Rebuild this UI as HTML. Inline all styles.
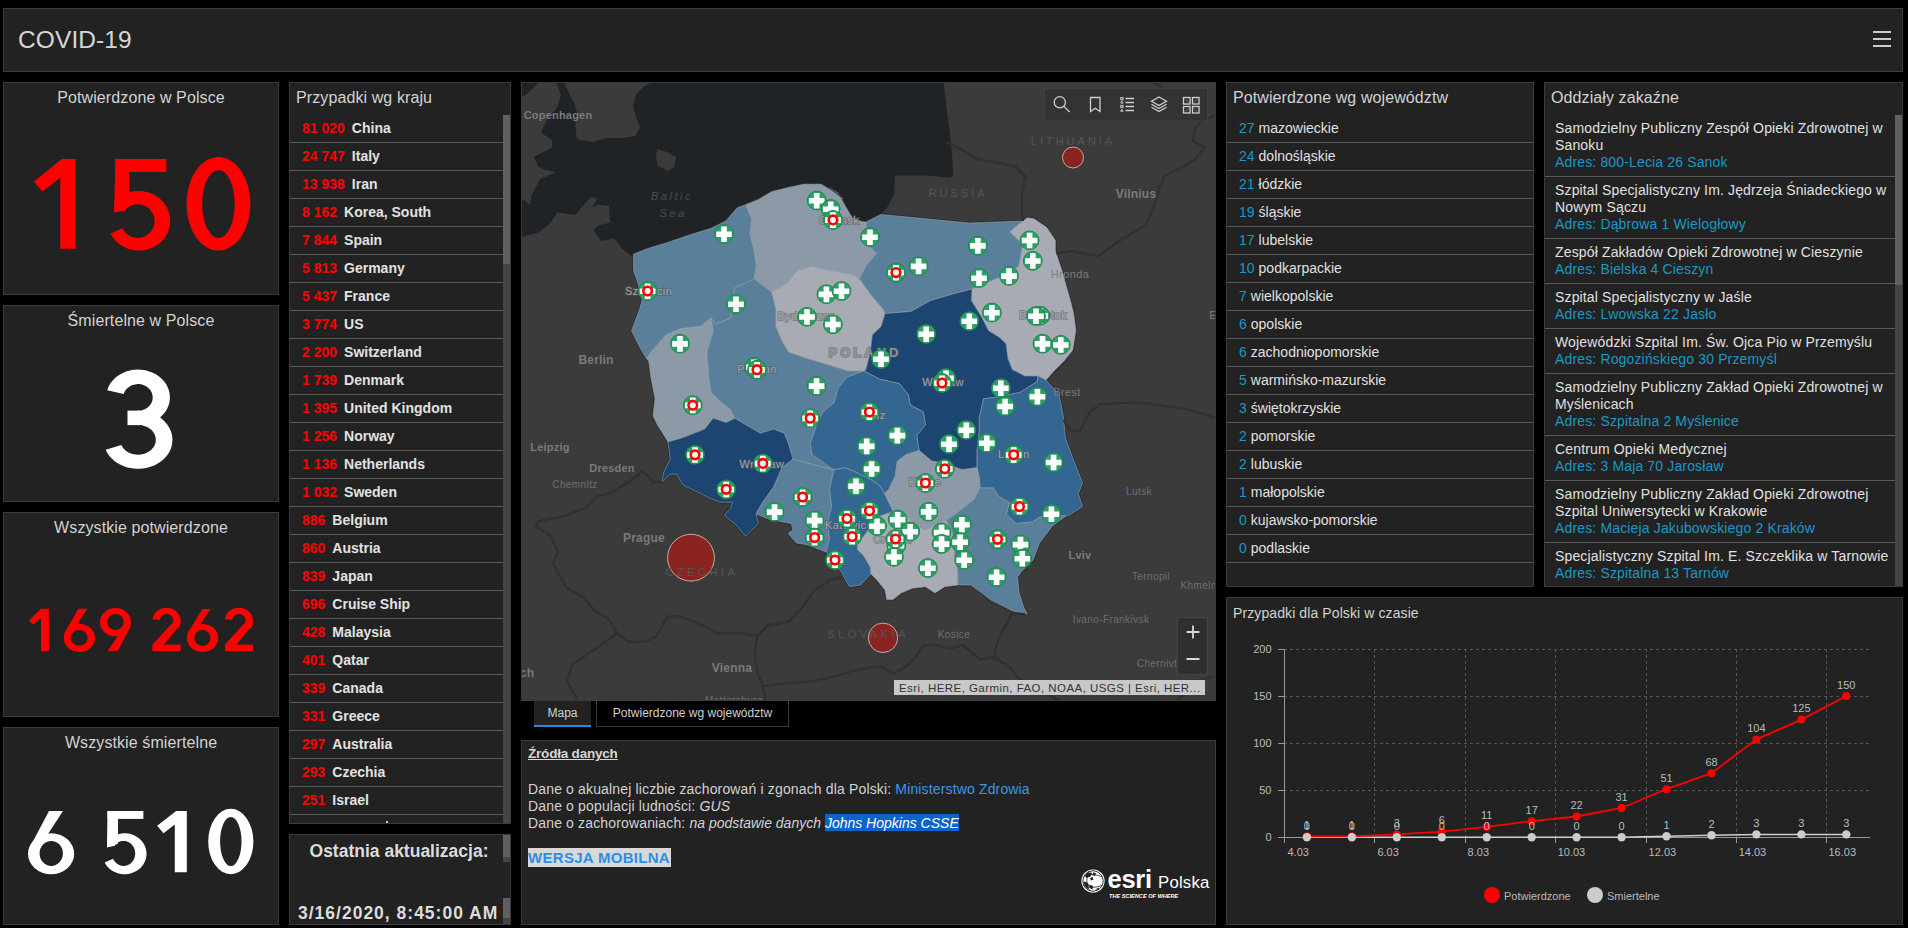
<!DOCTYPE html>
<html><head><meta charset="utf-8">
<style>
*{box-sizing:border-box;margin:0;padding:0}
html,body{width:1908px;height:928px;background:#000;overflow:hidden;font-family:"Liberation Sans",sans-serif;color:#d4d4d4}
.p{position:absolute;background:#222;border:1px solid #3b3b3b;overflow:hidden}
.ttl{position:absolute;font-size:16px;color:#d2d2d2;white-space:nowrap;letter-spacing:0.1px}
.big{position:absolute;left:0;right:0;text-align:center;white-space:nowrap;line-height:1}
.row{position:absolute;left:0;height:28px;border-bottom:1px solid #5a5a5a;white-space:nowrap;font-size:14px}
.row{padding:5px 0 0 12px;line-height:16px}
.cn{color:#f00;font-weight:bold}
.cc{color:#e2e2e2;font-weight:bold;margin-left:7px}
.pn{color:#1b98c4}
.pc{color:#e0e0e0;margin-left:4px}
.hrow{position:absolute;left:0;width:350px;border-bottom:1px solid #5a5a5a;padding:5px 0 0 10px;font-size:14px;line-height:17px;color:#e0e0e0;white-space:nowrap;letter-spacing:0.15px}
.adr{color:#1b98c4}
.upd{position:absolute;left:0;right:8px;text-align:center;font-size:17.5px;font-weight:bold;color:#dcdcdc;white-space:nowrap}
</style></head><body>
<!-- header -->
<div class="p" style="left:3px;top:8px;width:1900px;height:64px">
  <div class="ttl" style="left:14px;top:17px;font-size:24.5px;color:#d6d6d6">COVID-19</div>
  <div style="position:absolute;left:1869px;top:22px;width:18px;height:2px;background:#ccc"></div>
  <div style="position:absolute;left:1869px;top:29px;width:18px;height:2px;background:#ccc"></div>
  <div style="position:absolute;left:1869px;top:36px;width:18px;height:2px;background:#ccc"></div>
</div>
<!-- col1 -->
<div class="p" style="left:3px;top:82px;width:276px;height:213px">
  <div class="ttl" style="left:0;right:0;text-align:center;top:6px">Potwierdzone w Polsce</div>
  
</div>
<div class="p" style="left:3px;top:305px;width:276px;height:197px">
  <div class="ttl" style="left:0;right:0;text-align:center;top:6px">Śmiertelne w Polsce</div>
  
</div>
<div class="p" style="left:3px;top:512px;width:276px;height:205px">
  <div class="ttl" style="left:0;right:0;text-align:center;top:6px">Wszystkie potwierdzone</div>
  
</div>
<div class="p" style="left:3px;top:727px;width:276px;height:198px">
  <div class="ttl" style="left:0;right:0;text-align:center;top:6px">Wszystkie śmiertelne</div>
  
</div>
<div class="p" style="left:289px;top:82px;width:222px;height:742px">
<div class="ttl" style="left:6px;top:6px">Przypadki wg kraju</div>
<div style="position:absolute;left:213px;top:32px;width:8px;height:720px;background:#444"></div>
<div style="position:absolute;left:213px;top:32px;width:8px;height:149px;background:#606060"></div>
<div class="row" style="top:32px;width:213px"><span class="cn">81 020</span><span class="cc">China</span></div>
<div class="row" style="top:60px;width:213px"><span class="cn">24 747</span><span class="cc">Italy</span></div>
<div class="row" style="top:88px;width:213px"><span class="cn">13 938</span><span class="cc">Iran</span></div>
<div class="row" style="top:116px;width:213px"><span class="cn">8 162</span><span class="cc">Korea, South</span></div>
<div class="row" style="top:144px;width:213px"><span class="cn">7 844</span><span class="cc">Spain</span></div>
<div class="row" style="top:172px;width:213px"><span class="cn">5 813</span><span class="cc">Germany</span></div>
<div class="row" style="top:200px;width:213px"><span class="cn">5 437</span><span class="cc">France</span></div>
<div class="row" style="top:228px;width:213px"><span class="cn">3 774</span><span class="cc">US</span></div>
<div class="row" style="top:256px;width:213px"><span class="cn">2 200</span><span class="cc">Switzerland</span></div>
<div class="row" style="top:284px;width:213px"><span class="cn">1 739</span><span class="cc">Denmark</span></div>
<div class="row" style="top:312px;width:213px"><span class="cn">1 395</span><span class="cc">United Kingdom</span></div>
<div class="row" style="top:340px;width:213px"><span class="cn">1 256</span><span class="cc">Norway</span></div>
<div class="row" style="top:368px;width:213px"><span class="cn">1 136</span><span class="cc">Netherlands</span></div>
<div class="row" style="top:396px;width:213px"><span class="cn">1 032</span><span class="cc">Sweden</span></div>
<div class="row" style="top:424px;width:213px"><span class="cn">886</span><span class="cc">Belgium</span></div>
<div class="row" style="top:452px;width:213px"><span class="cn">860</span><span class="cc">Austria</span></div>
<div class="row" style="top:480px;width:213px"><span class="cn">839</span><span class="cc">Japan</span></div>
<div class="row" style="top:508px;width:213px"><span class="cn">696</span><span class="cc">Cruise Ship</span></div>
<div class="row" style="top:536px;width:213px"><span class="cn">428</span><span class="cc">Malaysia</span></div>
<div class="row" style="top:564px;width:213px"><span class="cn">401</span><span class="cc">Qatar</span></div>
<div class="row" style="top:592px;width:213px"><span class="cn">339</span><span class="cc">Canada</span></div>
<div class="row" style="top:620px;width:213px"><span class="cn">331</span><span class="cc">Greece</span></div>
<div class="row" style="top:648px;width:213px"><span class="cn">297</span><span class="cc">Australia</span></div>
<div class="row" style="top:676px;width:213px"><span class="cn">293</span><span class="cc">Czechia</span></div>
<div class="row" style="top:704px;width:213px"><span class="cn">251</span><span class="cc">Israel</span></div>
<div class="row" style="top:732px;width:213px"><span class="cn"></span><span class="cc"></span><div style="position:absolute;left:96px;top:6px;width:2px;height:2px;background:#ccc"></div></div>
</div>
<div class="p" style="left:289px;top:834px;width:222px;height:91px">
<div class="upd" style="top:6px;right:2px">Ostatnia aktualizacja:</div>
<div class="upd" style="top:68px;left:8px;text-align:left;letter-spacing:1px">3/16/2020, 8:45:00 AM</div>
<div style="position:absolute;left:213px;top:0;width:8px;height:22px;background:#606060"></div>
<div style="position:absolute;left:213px;top:22px;width:8px;height:5px;background:#444"></div>
<div style="position:absolute;left:213px;top:63px;width:8px;height:20px;background:#606060"></div>
<div style="position:absolute;left:213px;top:83px;width:8px;height:6px;background:#444"></div>
</div>
<div class="p" style="left:1226px;top:82px;width:308px;height:505px">
<div class="ttl" style="left:6px;top:6px">Potwierdzone wg województw</div>
<div class="row" style="top:32px;width:306px"><span class="pn">27</span><span class="pc">mazowieckie</span></div>
<div class="row" style="top:60px;width:306px"><span class="pn">24</span><span class="pc">dolnośląskie</span></div>
<div class="row" style="top:88px;width:306px"><span class="pn">21</span><span class="pc">łódzkie</span></div>
<div class="row" style="top:116px;width:306px"><span class="pn">19</span><span class="pc">śląskie</span></div>
<div class="row" style="top:144px;width:306px"><span class="pn">17</span><span class="pc">lubelskie</span></div>
<div class="row" style="top:172px;width:306px"><span class="pn">10</span><span class="pc">podkarpackie</span></div>
<div class="row" style="top:200px;width:306px"><span class="pn">7</span><span class="pc">wielkopolskie</span></div>
<div class="row" style="top:228px;width:306px"><span class="pn">6</span><span class="pc">opolskie</span></div>
<div class="row" style="top:256px;width:306px"><span class="pn">6</span><span class="pc">zachodniopomorskie</span></div>
<div class="row" style="top:284px;width:306px"><span class="pn">5</span><span class="pc">warmińsko-mazurskie</span></div>
<div class="row" style="top:312px;width:306px"><span class="pn">3</span><span class="pc">świętokrzyskie</span></div>
<div class="row" style="top:340px;width:306px"><span class="pn">2</span><span class="pc">pomorskie</span></div>
<div class="row" style="top:368px;width:306px"><span class="pn">2</span><span class="pc">lubuskie</span></div>
<div class="row" style="top:396px;width:306px"><span class="pn">1</span><span class="pc">małopolskie</span></div>
<div class="row" style="top:424px;width:306px"><span class="pn">0</span><span class="pc">kujawsko-pomorskie</span></div>
<div class="row" style="top:452px;width:306px"><span class="pn">0</span><span class="pc">podlaskie</span></div>
</div>
<div class="p" style="left:1544px;top:82px;width:359px;height:505px">
<div class="ttl" style="left:6px;top:6px">Oddziały zakaźne</div>
<div style="position:absolute;left:350px;top:32px;width:7px;height:480px;background:#444"></div>
<div style="position:absolute;left:350px;top:32px;width:7px;height:170px;background:#606060"></div>
<div class="hrow" style="top:32px;height:62px"><div>Samodzielny Publiczny Zespół Opieki Zdrowotnej w</div><div>Sanoku</div><div class="adr">Adres: 800-Lecia 26 Sanok</div></div>
<div class="hrow" style="top:94px;height:62px"><div>Szpital Specjalistyczny Im. Jędrzeja Śniadeckiego w</div><div>Nowym Sączu</div><div class="adr">Adres: Dąbrowa 1 Wielogłowy</div></div>
<div class="hrow" style="top:156px;height:45px"><div>Zespół Zakładów Opieki Zdrowotnej w Cieszynie</div><div class="adr">Adres: Bielska 4 Cieszyn</div></div>
<div class="hrow" style="top:201px;height:45px"><div>Szpital Specjalistyczny w Jaśle</div><div class="adr">Adres: Lwowska 22 Jasło</div></div>
<div class="hrow" style="top:246px;height:45px"><div>Wojewódzki Szpital Im. Św. Ojca Pio w Przemyślu</div><div class="adr">Adres: Rogozińskiego 30 Przemyśl</div></div>
<div class="hrow" style="top:291px;height:62px"><div>Samodzielny Publiczny Zakład Opieki Zdrowotnej w</div><div>Myślenicach</div><div class="adr">Adres: Szpitalna 2 Myślenice</div></div>
<div class="hrow" style="top:353px;height:45px"><div>Centrum Opieki Medycznej</div><div class="adr">Adres: 3 Maja 70 Jarosław</div></div>
<div class="hrow" style="top:398px;height:62px"><div>Samodzielny Publiczny Zakład Opieki Zdrowotnej</div><div>Szpital Uniwersytecki w Krakowie</div><div class="adr">Adres: Macieja Jakubowskiego 2 Kraków</div></div>
<div class="hrow" style="top:460px;height:45px"><div>Specjalistyczny Szpital Im. E. Szczeklika w Tarnowie</div><div class="adr">Adres: Szpitalna 13 Tarnów</div></div>
</div>
<div style="position:absolute;left:534px;top:700px;width:57px;height:27px;background:#222;border-bottom:2px solid #2a8be0;font-size:12px;color:#d0d0d0;text-align:center;line-height:26px">Mapa</div>
<div style="position:absolute;left:596px;top:700px;width:193px;height:27px;background:#000;border:1px solid #3b3b3b;border-top:none;font-size:12px;color:#d0d0d0;text-align:center;line-height:26px">Potwierdzone wg województw</div>
<div class="p" style="left:521px;top:740px;width:695px;height:185px;font-size:14px;letter-spacing:0.15px;color:#d2d2d2">
<div style="position:absolute;left:6px;top:5px;font-size:13.5px;font-weight:bold;letter-spacing:-0.2px;text-decoration:underline;color:#d6d6d6">Źródła danych</div>
<div style="position:absolute;left:6px;top:40px;line-height:17px;white-space:nowrap">Dane o akualnej liczbie zachorowań i zgonach dla Polski: <span style="color:#3d97ea">Ministerstwo Zdrowia</span><br>Dane o populacji ludności: <i>GUS</i><br>Dane o zachorowaniach: <i style="letter-spacing:0">na podstawie danych <span style="background:#0b63cc;color:#fff;padding-top:1px">Johns Hopkins CSSE</span></i></div>
<div style="position:absolute;left:6px;top:107px;width:143px;height:19px;background:#d8d8d8;color:#2a8fe8;font-size:15px;font-weight:bold;letter-spacing:0.3px;line-height:19px;white-space:nowrap">WERSJA MOBILNA</div>
</div>
<svg style="position:absolute;left:1075px;top:862px" width="140" height="40" viewBox="1075 862 140 40" font-family="Liberation Sans, sans-serif">
<circle cx="1093" cy="881" r="11.6" fill="#fff"/>
<circle cx="1093" cy="881" r="10.2" fill="none" stroke="#222" stroke-width="0.9"/>
<path d="M1085,875c2.5,-2.5 5,-3 7,-2l-1.5,3.5l-4,1.5zM1083.5,881.5c2.5,0 4.5,1.5 5.5,3.5l-1,4c-2.5,-1.5 -4,-4 -4.5,-7.5zM1089.5,884.5l3.5,1.5l-0.5,3.5l-3,-1.5zM1093,872.5l3,0.5l-1,3l-2.5,-1zM1095.5,889.5l3,-2l0.5,2.5zM1090,878l2.5,-1l1,2.5l-2.5,1z" fill="#222"/>
<path d="M1084,877c5,-3 13,-3 18,0M1083,885c5,3 14,3 19,0M1089,871c-3,5 -3,15 1,20" fill="none" stroke="#222" stroke-width="0.8"/>
<text x="1107.5" y="888" font-size="25.5" font-weight="bold" fill="#fff" letter-spacing="-0.3">esri</text>
<text x="1158" y="887.7" font-size="16.8" fill="#fff" letter-spacing="0.2">Polska</text>
<text x="1109" y="897.5" font-size="5.6" font-weight="bold" font-style="italic" fill="#fff">THE SCIENCE OF WHERE</text>
</svg>
<!--DIG--><svg style="position:absolute;left:0;top:0" width="290" height="928" viewBox="0 0 290 928">
<g fill="#f00"><polygon points="34.0,181.6 61.8,159.0 75.6,159.0 75.6,248.8 60.3,248.8 60.3,177.7 42.5,191.6"/><rect x="115.4" y="159" width="51.00" height="13.00"/><polygon points="115.4,159.0 129.3,159.0 129.0,207.0 114.2,211.0"/><polygon points="114.2,202.5 116.5,200.0 118.9,197.8 121.7,195.9 124.6,194.3 127.7,193.0 130.9,192.0 134.2,191.3 137.5,191.0 140.9,191.1 144.3,191.4 147.6,192.2 150.8,193.2 153.8,194.6 156.7,196.3 159.4,198.2 161.8,200.5 164.0,202.9 165.8,205.6 167.4,208.5 168.6,211.5 169.5,214.6 170.0,217.7 170.2,221.0 170.0,224.2 169.4,227.3 168.5,230.4 167.3,233.4 165.7,236.3 163.8,238.9 161.6,241.4 159.1,243.6 156.4,245.5 153.5,247.2 150.4,248.5 147.2,249.5 143.9,250.2 140.6,250.6 137.2,250.6 133.8,250.2 130.5,249.5 127.3,248.5 124.3,247.1 121.4,245.5 118.7,243.5 116.2,241.3 114.0,238.9 112.1,236.2 110.5,233.4 122.4,228.2 123.2,229.9 124.3,231.4 125.5,232.7 126.8,234.0 128.2,235.1 129.8,236.0 131.5,236.8 133.2,237.4 135.0,237.8 136.8,238.0 138.6,238.0 140.4,237.8 142.2,237.4 143.9,236.8 145.6,236.0 147.2,235.1 148.6,234.0 149.9,232.8 151.1,231.4 152.1,229.9 153.0,228.3 153.7,226.6 154.2,224.8 154.5,223.0 154.6,221.2 154.5,219.4 154.2,217.6 153.7,215.8 153.1,214.1 152.2,212.5 151.2,211.0 150.1,209.6 148.7,208.3 147.3,207.2 145.7,206.2 144.1,205.5 142.4,204.9 140.6,204.5 138.8,204.2 137.0,204.2 135.1,204.4 133.4,204.8 131.6,205.3 130.0,206.1 128.4,207.0 126.9,208.1 125.6,209.3 124.4,210.7"/><polygon points="114.2,203.0 129.2,203.0 126.8,208.2 124.4,210.7 114.2,212.5"/><path fill-rule="evenodd" d="M186.50,203.80a31.95,46.80 0 1,0 63.90,0a31.95,46.80 0 1,0 -63.90,0zM202.20,203.95a16.25,34.05 0 1,0 32.50,0a16.25,34.05 0 1,0 -32.50,0z"/></g>
<g fill="#fff"><polygon points="107.2,390.2 108.1,387.7 109.2,385.4 110.6,383.1 112.3,381.0 114.1,379.0 116.2,377.1 118.4,375.4 120.9,374.0 123.4,372.7 126.1,371.6 128.9,370.8 131.8,370.1 134.7,369.7 137.7,369.6 140.6,369.7 143.5,370.0 146.4,370.6 149.2,371.4 152.0,372.4 154.5,373.6 157.0,375.1 159.3,376.7 161.4,378.5 163.3,380.5 165.0,382.6 166.5,384.8 167.7,387.2 168.6,389.6 169.3,392.1 169.7,394.7 169.9,397.2 169.8,399.8 169.4,402.4 168.7,404.9 167.8,407.3 166.6,409.7 165.2,412.0 163.5,414.1 161.6,416.1 159.6,417.9 157.3,419.5 154.8,421.0 152.3,422.3 149.6,423.3 146.8,424.1 143.9,424.7 141.0,425.1 138.0,425.2 138.0,410.7 139.4,410.6 140.7,410.5 142.0,410.2 143.3,409.8 144.6,409.3 145.8,408.7 146.9,408.0 147.9,407.2 148.9,406.3 149.8,405.4 150.5,404.4 151.2,403.3 151.7,402.2 152.2,401.0 152.5,399.8 152.6,398.6 152.7,397.3 152.6,396.1 152.4,394.9 152.1,393.7 151.7,392.5 151.1,391.4 150.4,390.3 149.7,389.3 148.8,388.4 147.8,387.5 146.8,386.7 145.6,386.0 144.4,385.4 143.2,385.0 141.9,384.6 140.6,384.3 139.2,384.1 137.8,384.1 136.5,384.2 135.1,384.4 133.8,384.7 132.5,385.1 131.3,385.6 130.1,386.2 129.0,386.9 128.0,387.7 127.0,388.6 126.1,389.5 125.4,390.6 124.7,391.6 124.2,392.8 123.8,394.0"/><rect x="127.5" y="410.6" width="11.50" height="14.50"/><polygon points="138.0,410.8 141.1,410.9 144.2,411.3 147.3,411.9 150.2,412.7 153.1,413.7 155.8,415.0 158.4,416.5 160.9,418.1 163.1,420.0 165.1,422.0 166.9,424.1 168.5,426.4 169.8,428.8 170.9,431.3 171.7,433.8 172.2,436.4 172.4,439.1 172.3,441.7 172.0,444.3 171.4,446.9 170.5,449.4 169.3,451.9 167.9,454.2 166.2,456.4 164.3,458.5 162.1,460.5 159.8,462.2 157.3,463.8 154.7,465.2 151.9,466.3 148.9,467.3 145.9,468.0 142.9,468.5 139.8,468.8 136.6,468.8 133.5,468.6 130.4,468.1 127.4,467.4 124.5,466.5 121.7,465.3 119.0,464.0 116.5,462.4 114.1,460.7 112.0,458.8 110.0,456.7 108.3,454.5 106.9,452.2 105.7,449.7 121.3,444.9 121.9,446.1 122.6,447.3 123.5,448.5 124.5,449.5 125.6,450.5 126.9,451.4 128.2,452.2 129.6,452.9 131.0,453.5 132.5,454.0 134.1,454.3 135.7,454.6 137.3,454.7 138.9,454.7 140.5,454.6 142.1,454.3 143.7,453.9 145.2,453.4 146.6,452.8 148.0,452.1 149.3,451.3 150.5,450.4 151.6,449.4 152.6,448.3 153.4,447.2 154.2,446.0 154.8,444.7 155.3,443.4 155.6,442.1 155.8,440.8 155.8,439.4 155.7,438.1 155.4,436.7 155.0,435.4 154.5,434.1 153.8,432.9 153.0,431.7 152.0,430.6 151.0,429.6 149.8,428.7 148.6,427.8 147.2,427.1 145.8,426.4 144.3,425.9 142.8,425.5 141.2,425.1 139.6,425.0 138.0,424.9"/></g>
<g fill="#f00"><polygon points="29.1,620.6 41.0,608.7 48.9,608.7 48.9,651.0 41.0,651.0 41.0,618.1 33.3,624.8"/><path fill-rule="evenodd" d="M63.80,638.00a15.60,14.00 0 1,0 31.20,0a15.60,14.00 0 1,0 -31.20,0zM70.80,637.90a8.40,7.90 0 1,0 16.80,0a8.40,7.90 0 1,0 -16.80,0z"/><polygon points="78.5,608.7 87.2,608.7 75.5,627.5 64.2,633.5"/><path fill-rule="evenodd" d="M99.90,622.15a15.55,14.15 0 1,0 31.10,0a15.55,14.15 0 1,0 -31.10,0zM107.20,621.95a8.25,8.05 0 1,0 16.50,0a8.25,8.05 0 1,0 -16.50,0z"/><polygon points="130.9,626.0 117.7,651.0 107.6,651.0 121.5,630.5"/><polygon points="152.4,619.2 152.6,618.2 152.9,617.2 153.3,616.2 153.7,615.3 154.2,614.4 154.8,613.6 155.4,612.8 156.1,612.0 156.9,611.3 157.7,610.6 158.6,610.0 159.5,609.5 160.5,609.0 161.5,608.7 162.5,608.3 163.5,608.1 164.6,607.9 165.7,607.8 166.8,607.8 167.9,607.9 168.9,608.0 170.0,608.2 171.0,608.5 172.0,608.8 173.0,609.3 174.0,609.8 174.9,610.3 175.7,611.0 176.5,611.6 177.3,612.4 177.9,613.2 178.5,614.0 179.1,614.9 179.5,615.8 179.9,616.7 180.2,617.7 180.5,618.7 180.6,619.7 180.7,620.7 180.7,621.7 180.6,622.7 180.4,623.7 180.1,624.7 179.8,625.6 179.4,626.6 178.9,627.4 178.3,628.3 177.7,629.1 171.9,625.4 172.2,624.9 172.4,624.5 172.7,624.0 172.9,623.5 173.0,623.0 173.2,622.4 173.2,621.9 173.3,621.4 173.3,620.8 173.3,620.3 173.2,619.8 173.1,619.2 172.9,618.7 172.7,618.2 172.5,617.7 172.3,617.2 172.0,616.8 171.7,616.4 171.3,616.0 170.9,615.6 170.5,615.3 170.1,615.0 169.6,614.7 169.2,614.5 168.7,614.3 168.2,614.1 167.7,614.0 167.2,613.9 166.6,613.9 166.1,613.9 165.6,614.0 165.1,614.1 164.6,614.2 164.1,614.4 163.6,614.6 163.2,614.8 162.7,615.1 162.3,615.4 161.9,615.8 161.5,616.2 161.2,616.6 160.9,617.0 160.6,617.5 160.4,617.9 160.2,618.4 160.0,619.0 159.9,619.5 159.8,620.0"/><polygon points="180.4,624.5 172.8,622.6 152.6,644.6 152.6,651.1 162.8,646.0"/><rect x="152.6" y="644.6" width="28.10" height="6.50"/><path fill-rule="evenodd" d="M186.90,638.00a15.65,14.05 0 1,0 31.30,0a15.65,14.05 0 1,0 -31.30,0zM194.30,637.95a8.10,7.95 0 1,0 16.20,0a8.10,7.95 0 1,0 -16.20,0z"/><polygon points="202.4,608.9 210.5,608.9 198.5,627.5 187.5,633.5"/><polygon points="224.8,619.2 225.0,618.2 225.3,617.2 225.7,616.2 226.1,615.3 226.6,614.4 227.2,613.6 227.8,612.8 228.5,612.0 229.3,611.3 230.1,610.6 231.0,610.0 231.9,609.5 232.9,609.0 233.9,608.7 234.9,608.3 235.9,608.1 237.0,607.9 238.1,607.8 239.2,607.8 240.3,607.9 241.3,608.0 242.4,608.2 243.4,608.5 244.4,608.8 245.4,609.3 246.4,609.8 247.3,610.3 248.1,611.0 248.9,611.6 249.7,612.4 250.3,613.2 250.9,614.0 251.5,614.9 251.9,615.8 252.3,616.7 252.6,617.7 252.9,618.7 253.0,619.7 253.1,620.7 253.1,621.7 253.0,622.7 252.8,623.7 252.5,624.7 252.2,625.6 251.8,626.6 251.3,627.4 250.7,628.3 250.1,629.1 244.3,625.4 244.6,624.9 244.8,624.5 245.1,624.0 245.3,623.5 245.4,623.0 245.6,622.4 245.6,621.9 245.7,621.4 245.7,620.8 245.7,620.3 245.6,619.8 245.5,619.2 245.3,618.7 245.1,618.2 244.9,617.7 244.7,617.2 244.4,616.8 244.1,616.4 243.7,616.0 243.3,615.6 242.9,615.3 242.5,615.0 242.0,614.7 241.6,614.5 241.1,614.3 240.6,614.1 240.1,614.0 239.6,613.9 239.0,613.9 238.5,613.9 238.0,614.0 237.5,614.1 237.0,614.2 236.5,614.4 236.0,614.6 235.6,614.8 235.1,615.1 234.7,615.4 234.3,615.8 233.9,616.2 233.6,616.6 233.3,617.0 233.0,617.5 232.8,617.9 232.6,618.4 232.4,619.0 232.3,619.5 232.2,620.0"/><polygon points="252.8,624.5 245.2,622.6 225.0,644.6 225.0,651.1 235.2,646.0"/><rect x="225.0" y="644.6" width="28.10" height="6.50"/></g>
<g fill="#fff"><path fill-rule="evenodd" d="M28.00,853.75a23.10,20.45 0 1,0 46.20,0a23.10,20.45 0 1,0 -46.20,0zM39.60,853.45a11.65,12.55 0 1,0 23.30,0a11.65,12.55 0 1,0 -23.30,0z"/><polygon points="49.0,811.0 63.0,811.0 47.0,835.5 29.2,848.5"/><rect x="107.5" y="811" width="35.90" height="7.90"/><polygon points="107.5,811.0 118.2,811.0 117.8,844.0 107.0,846.0"/><polygon points="107.2,841.2 108.7,839.5 110.5,838.0 112.4,836.7 114.4,835.6 116.6,834.7 118.9,834.0 121.2,833.5 123.5,833.3 125.9,833.3 128.3,833.6 130.6,834.1 132.8,834.8 135.0,835.8 137.0,836.9 138.9,838.3 140.6,839.8 142.1,841.5 143.4,843.3 144.5,845.3 145.4,847.3 146.0,849.5 146.4,851.7 146.5,853.9 146.4,856.1 146.0,858.2 145.3,860.4 144.4,862.4 143.3,864.4 142.0,866.2 140.4,867.9 138.7,869.4 136.8,870.7 134.8,871.8 132.6,872.8 130.4,873.5 128.0,873.9 125.7,874.2 123.3,874.2 120.9,873.9 118.6,873.5 116.4,872.8 114.2,871.8 112.2,870.7 110.3,869.4 108.6,867.8 107.0,866.2 105.7,864.3 104.6,862.4 113.1,858.8 113.7,859.9 114.4,861.1 115.2,862.1 116.1,863.0 117.1,863.8 118.2,864.5 119.3,865.1 120.5,865.5 121.7,865.8 123.0,866.0 124.2,866.0 125.5,865.8 126.7,865.5 127.9,865.1 129.0,864.6 130.1,863.9 131.1,863.0 132.0,862.1 132.8,861.1 133.5,860.0 134.1,858.8 134.6,857.5 134.9,856.2 135.1,854.9 135.2,853.5 135.1,852.2 134.9,850.8 134.6,849.5 134.2,848.3 133.6,847.1 132.9,845.9 132.1,844.9 131.2,844.0 130.2,843.1 129.1,842.4 128.0,841.8 126.8,841.4 125.6,841.1 124.3,840.9 123.1,840.9 121.8,841.0 120.6,841.3 119.4,841.7 118.3,842.3 117.2,843.0 116.2,843.8 115.3,844.7 114.5,845.7"/><polygon points="107.2,839.0 118.0,839.0 116.1,843.8 114.5,845.7 107.0,847.5"/><polygon points="157.2,825.8 176.1,811.0 186.8,811.0 186.8,872.3 174.8,872.3 174.8,824.5 163.5,833.3"/><path fill-rule="evenodd" d="M208.20,841.50a22.60,32.70 0 1,0 45.20,0a22.60,32.70 0 1,0 -45.20,0zM220.10,841.50a10.70,24.50 0 1,0 21.40,0a10.70,24.50 0 1,0 -21.40,0z"/></g>
</svg><!--/DIG-->
<!--MAP--><svg style="position:absolute;left:0;top:0" width="1908" height="928" viewBox="0 0 1908 928" font-family="Liberation Sans, sans-serif">
<defs><clipPath id="mc"><rect x="521" y="82" width="695" height="619"/></clipPath></defs>
<g clip-path="url(#mc)">
<rect x="521" y="82" width="695" height="619" fill="#3b3b3b"/>
<polygon points="652.0,82.0 943.7,82.0 947.2,113.8 949.6,130.4 952.0,154.0 953.2,175.4 949.6,177.8 926.0,175.4 895.0,175.4 894.0,194.4 888.0,206.3 881.0,214.5 866.0,222.0 862.0,221.7 852.4,218.0 845.3,206.3 840.4,197.2 831.8,190.8 821.0,184.3 803.8,184.3 788.7,187.5 771.5,191.8 758.6,199.4 745.6,204.8 737.0,208.0 726.0,221.0 711.0,228.5 689.6,235.0 668.0,242.5 646.5,249.0 633.6,254.3 632.2,256.4 621.9,248.6 614.1,238.3 601.2,240.9 593.4,230.5 598.6,225.3 610.2,222.8 608.9,206.0 598.6,204.7 592.1,207.2 597.3,198.2 590.8,196.9 581.8,207.2 575.3,215.0 557.2,212.4 550.7,222.8 537.8,233.1 521.0,237.0 521.0,198.0 530.0,204.7 531.3,195.6 540.4,178.8 556.0,172.3 544.3,169.7 537.8,165.9 534.0,156.8 552.0,147.8 552.0,140.0 541.0,132.8 545.7,122.0 557.5,106.7 561.0,95.0 556.0,82.0 563.5,82.0 574.0,103.0 577.7,113.8 575.3,122.0 576.5,137.5 580.0,140.0 593.0,142.0 606.0,138.0 622.0,138.0 635.0,136.0 640.0,127.0 637.0,120.0 633.0,106.0 636.0,95.0 643.0,87.0" fill="#1f2326"/>
<polygon points="521.0,82.0 539.0,82.0 527.0,94.0 521.0,98.0" fill="#1f2326"/>
<polygon points="657.0,149.0 667.0,152.0 676.0,157.0 674.0,167.0 668.0,171.0 658.0,166.0 656.0,157.0" fill="#3b3b3b"/>
</g>
<polyline points="822,186 830,188.5 837,193 843,199.5" fill="none" stroke="#8b9aa6" stroke-width="1.3" clip-path="url(#mc)"/>
<polygon points="633.6,254.3 646.5,249.0 668.0,242.5 689.6,235.0 711.0,228.5 726.0,221.0 737.0,208.0 745.6,204.8 758.6,199.4 771.5,191.8 788.7,187.5 803.8,184.3 821.0,184.3 831.8,190.8 840.4,197.2 845.3,206.3 852.4,218.0 862.0,221.7 866.0,222.0 881.0,214.5 926.2,218.8 969.3,223.0 1023.0,221.0 1027.4,217.7 1034.0,218.8 1046.8,227.4 1055.4,240.3 1055.4,251.0 1062.0,270.5 1066.2,285.6 1070.5,300.6 1073.7,313.6 1075.9,330.8 1072.7,350.2 1064.0,361.0 1055.4,369.6 1046.0,380.0 1059.0,394.5 1063.3,416.0 1065.4,437.6 1074.0,461.2 1082.7,482.8 1078.3,493.6 1082.7,506.5 1069.7,515.0 1066.0,516.0 1052.5,525.9 1039.6,543.1 1033.1,560.0 1022.4,570.5 1017.6,577.0 1019.2,593.1 1024.0,607.7 1027.3,614.1 1012.7,610.9 1003.0,606.0 990.1,599.6 982.0,593.1 970.7,585.0 957.8,585.0 944.8,586.7 935.0,593.1 925.4,586.7 912.5,588.3 901.2,593.1 893.0,599.6 886.7,599.6 885.0,590.0 877.0,580.2 871.0,574.0 860.8,585.0 849.5,586.7 844.6,578.6 841.4,572.1 828.5,554.3 826.0,552.0 815.6,547.9 805.9,544.6 796.2,543.0 788.0,533.3 793.0,530.0 791.3,523.6 769.3,519.4 756.0,514.0 758.5,523.7 745.6,536.6 737.0,526.0 724.0,515.0 730.5,508.6 732.6,502.2 719.7,502.2 709.0,497.9 696.0,491.4 683.0,485.0 676.6,474.2 670.2,474.2 661.5,482.8 663.7,472.0 670.2,459.0 668.0,441.9 657.2,424.6 653.0,416.0 655.0,398.8 650.8,377.2 648.7,361.0 646.5,358.8 640.0,348.0 631.5,330.8 638.0,313.6 642.2,300.6 638.0,283.4 633.6,270.5 633.6,254.3" fill="none" stroke="#2a2a2a" stroke-width="2.4" stroke-linejoin="round" clip-path="url(#mc)"/>
<g clip-path="url(#mc)" stroke="#93a2ad" stroke-opacity="0.75" stroke-width="0.8" stroke-linejoin="round">
<polygon points="633.6,254.3 646.5,249.0 668.0,242.5 689.6,235.0 711.0,228.5 726.0,221.0 737.0,208.0 745.6,204.8 745.6,204.8 752.0,218.8 750.0,233.9 754.3,251.0 756.4,266.2 754.3,279.0 754.3,279.0 735.0,287.7 732.7,300.6 730.6,317.9 715.5,324.3 711.2,317.9 711.2,317.9 700.4,326.5 681.0,328.6 666.0,335.0 650.9,352.3 646.5,358.8 646.5,358.8 640.0,348.0 631.5,330.8 638.0,313.6 642.2,300.6 638.0,283.4 633.6,270.5 633.6,254.3" fill="#5a7f9b"/>
<polygon points="745.6,204.8 758.6,199.4 771.5,191.8 788.7,187.5 803.8,184.3 821.0,184.3 831.8,190.8 840.4,197.2 845.3,206.3 852.4,218.0 862.0,221.7 866.0,222.0 866.0,222.0 868.0,244.6 876.6,253.2 865.9,266.2 859.4,279.0 859.4,279.0 853.4,274.8 829.7,270.5 812.4,266.2 797.3,270.5 786.6,283.4 771.5,292.0 771.5,292.0 762.0,285.0 754.3,279.0 754.3,279.0 756.4,266.2 754.3,251.0 750.0,233.9 752.0,218.8 745.6,204.8" fill="#8b9aa6"/>
<polygon points="866.0,222.0 881.0,214.5 926.2,218.8 969.3,223.0 1023.0,221.0 1023.0,221.0 1010.0,231.7 1023.0,244.6 1018.8,266.2 1006.0,274.8 990.8,281.2 972.0,289.0 972.0,289.0 952.0,294.2 930.5,300.6 911.0,311.4 885.0,313.6 885.0,313.6 883.0,309.3 870.2,294.2 859.4,279.0 859.4,279.0 865.9,266.2 876.6,253.2 868.0,244.6 866.0,222.0" fill="#5a7f9b"/>
<polygon points="1023.0,221.0 1027.4,217.7 1034.0,218.8 1046.8,227.4 1055.4,240.3 1055.4,251.0 1062.0,270.5 1066.2,285.6 1070.5,300.6 1073.7,313.6 1075.9,330.8 1072.7,350.2 1064.0,361.0 1055.4,369.6 1046.0,380.0 1046.0,380.0 1038.0,376.0 1038.0,376.0 1025.0,376.0 1012.3,369.6 1008.0,358.8 1006.0,343.7 999.4,337.3 988.6,330.8 982.2,317.9 971.4,300.6 972.0,289.0 972.0,289.0 990.8,281.2 1006.0,274.8 1018.8,266.2 1023.0,244.6 1010.0,231.7 1023.0,221.0" fill="#a9abb4"/>
<polygon points="771.5,292.0 786.6,283.4 797.3,270.5 812.4,266.2 829.7,270.5 853.4,274.8 859.4,279.0 859.4,279.0 870.2,294.2 883.0,309.3 885.0,313.6 885.0,313.6 881.0,326.5 872.3,335.0 870.2,352.3 865.9,369.6 864.0,371.0 864.0,371.0 848.0,371.0 829.7,365.3 808.0,358.8 788.7,352.3 782.2,341.6 775.8,326.5 775.8,309.3 771.5,292.0" fill="#a9abb4"/>
<polygon points="646.5,358.8 650.9,352.3 666.0,335.0 681.0,328.6 700.4,326.5 711.2,317.9 711.2,317.9 713.3,330.8 706.9,352.3 709.0,377.2 711.0,392.3 721.9,403.0 730.5,409.5 734.8,418.2 734.8,418.2 726.2,422.5 713.2,418.2 704.6,429.0 683.0,437.6 668.0,441.9 668.0,441.9 657.2,424.6 653.0,416.0 655.0,398.8 650.8,377.2 648.7,361.0 646.5,358.8" fill="#8b9aa6"/>
<polygon points="754.3,279.0 762.0,285.0 771.5,292.0 771.5,292.0 775.8,309.3 775.8,326.5 782.2,341.6 788.7,352.3 808.0,358.8 829.7,365.3 848.0,371.0 864.0,371.0 864.0,371.0 846.8,377.2 838.2,388.0 833.9,403.0 823.1,411.7 816.6,424.6 810.2,444.0 812.3,454.8 833.9,469.9 833.9,469.9 808.0,463.4 793.0,459.1 793.0,459.1 788.6,444.0 784.3,433.2 773.6,429.0 760.6,433.2 745.6,424.6 734.8,418.2 734.8,418.2 730.5,409.5 721.9,403.0 711.0,392.3 709.0,377.2 706.9,352.3 713.3,330.8 711.2,317.9 711.2,317.9 715.5,324.3 730.6,317.9 732.7,300.6 735.0,287.7 754.3,279.0" fill="#5a7f9b"/>
<polygon points="885.0,313.6 911.0,311.4 930.5,300.6 952.0,294.2 972.0,289.0 972.0,289.0 971.4,300.6 982.2,317.9 988.6,330.8 999.4,337.3 1006.0,343.7 1008.0,358.8 1012.3,369.6 1025.0,376.0 1038.0,376.0 1038.0,376.0 1037.4,381.5 1020.2,392.3 1000.8,396.6 983.6,398.8 979.3,418.2 979.3,431.1 977.1,450.5 977.1,467.7 977.1,467.7 962.0,469.9 944.8,463.4 931.9,461.2 919.0,450.5 919.0,450.5 916.8,435.4 925.4,424.6 923.2,411.7 910.3,405.2 908.2,394.5 899.5,383.7 880.2,379.4 864.0,371.0 864.0,371.0 865.9,369.6 870.2,352.3 872.3,335.0 881.0,326.5 885.0,313.6" fill="#1d4572"/>
<polygon points="864.0,371.0 880.2,379.4 899.5,383.7 908.2,394.5 910.3,405.2 923.2,411.7 925.4,424.6 916.8,435.4 919.0,450.5 919.0,450.5 906.0,454.8 897.4,461.2 895.2,476.3 888.8,489.3 884.5,493.6 884.5,493.6 880.0,486.0 872.7,480.6 855.4,472.0 844.7,467.7 833.9,469.9 833.9,469.9 812.3,454.8 810.2,444.0 816.6,424.6 823.1,411.7 833.9,403.0 838.2,388.0 846.8,377.2 864.0,371.0" fill="#336690"/>
<polygon points="1038.0,376.0 1046.0,380.0 1046.0,380.0 1059.0,394.5 1063.3,416.0 1065.4,437.6 1074.0,461.2 1082.7,482.8 1078.3,493.6 1082.7,506.5 1069.7,515.0 1066.0,516.0 1066.0,516.0 1048.2,515.1 1040.0,517.2 1032.1,522.0 1016.0,523.6 1006.2,514.0 1009.5,502.6 998.2,496.2 993.3,488.0 980.0,488.0 980.0,488.0 979.3,478.0 977.1,467.7 977.1,467.7 977.1,450.5 979.3,431.1 979.3,418.2 983.6,398.8 1000.8,396.6 1020.2,392.3 1037.4,381.5 1038.0,376.0" fill="#336690"/>
<polygon points="734.8,418.2 745.6,424.6 760.6,433.2 773.6,429.0 784.3,433.2 788.6,444.0 793.0,459.1 793.0,459.1 782.2,467.7 773.6,487.1 762.8,502.2 756.0,514.0 756.0,514.0 758.5,523.7 745.6,536.6 737.0,526.0 724.0,515.0 730.5,508.6 732.6,502.2 719.7,502.2 709.0,497.9 696.0,491.4 683.0,485.0 676.6,474.2 670.2,474.2 661.5,482.8 663.7,472.0 670.2,459.0 668.0,441.9 668.0,441.9 683.0,437.6 704.6,429.0 713.2,418.2 726.2,422.5 734.8,418.2" fill="#1d4572"/>
<polygon points="793.0,459.1 808.0,463.4 833.9,469.9 833.9,469.9 829.6,489.3 831.7,506.5 827.4,523.7 829.6,538.8 826.0,552.0 826.0,552.0 815.6,547.9 805.9,544.6 796.2,543.0 788.0,533.3 793.0,530.0 791.3,523.6 769.3,519.4 756.0,514.0 756.0,514.0 762.8,502.2 773.6,487.1 782.2,467.7 793.0,459.1" fill="#5a7f9b"/>
<polygon points="833.9,469.9 844.7,467.7 855.4,472.0 872.7,480.6 880.0,486.0 884.5,493.6 884.5,493.6 893.0,510.8 891.5,512.3 891.5,512.3 877.0,517.2 867.3,531.7 857.6,544.6 857.6,549.5 864.0,556.0 870.5,567.3 871.0,574.0 871.0,574.0 860.8,585.0 849.5,586.7 844.6,578.6 841.4,572.1 828.5,554.3 826.0,552.0 826.0,552.0 829.6,538.8 827.4,523.7 831.7,506.5 829.6,489.3 833.9,469.9" fill="#336690"/>
<polygon points="919.0,450.5 931.9,461.2 944.8,463.4 962.0,469.9 977.1,467.7 977.1,467.7 979.3,478.0 980.0,488.0 980.0,488.0 974.0,499.4 957.8,512.3 946.4,520.4 946.4,520.4 935.0,525.2 925.4,530.0 914.1,525.2 906.0,514.0 891.5,512.3 891.5,512.3 893.0,510.8 884.5,493.6 884.5,493.6 888.8,489.3 895.2,476.3 897.4,461.2 906.0,454.8 919.0,450.5" fill="#8b9aa6"/>
<polygon points="891.5,512.3 906.0,514.0 914.1,525.2 925.4,530.0 935.0,525.2 946.4,520.4 946.4,520.4 951.3,528.5 954.5,541.4 954.5,556.0 957.8,570.5 957.8,585.0 957.8,585.0 944.8,586.7 935.0,593.1 925.4,586.7 912.5,588.3 901.2,593.1 893.0,599.6 886.7,599.6 885.0,590.0 877.0,580.2 871.0,574.0 871.0,574.0 870.5,567.3 864.0,556.0 857.6,549.5 857.6,544.6 867.3,531.7 877.0,517.2 891.5,512.3" fill="#a9abb4"/>
<polygon points="980.0,488.0 993.3,488.0 998.2,496.2 1009.5,502.6 1006.2,514.0 1016.0,523.6 1032.1,522.0 1040.0,517.2 1048.2,515.1 1066.0,516.0 1066.0,516.0 1052.5,525.9 1039.6,543.1 1033.1,560.0 1022.4,570.5 1017.6,577.0 1019.2,593.1 1024.0,607.7 1027.3,614.1 1012.7,610.9 1003.0,606.0 990.1,599.6 982.0,593.1 970.7,585.0 957.8,585.0 957.8,585.0 957.8,570.5 954.5,556.0 954.5,541.4 951.3,528.5 946.4,520.4 946.4,520.4 957.8,512.3 974.0,499.4 980.0,488.0" fill="#5a7f9b"/>
</g>
<g clip-path="url(#mc)">
<polyline points="662.0,482.0 653.7,482.0 642.4,470.8 636.8,476.4 628.4,482.0 611.6,493.2 597.6,496.0 586.4,507.2 566.8,515.6 552.8,518.4 538.8,521.2 536.0,526.8 550.0,535.2 558.4,552.0 552.8,563.2 566.8,588.5 583.6,596.9 594.8,610.9 608.8,619.3 617.2,633.3 628.4,641.7 645.2,641.7 656.5,636.0 667.7,616.5 678.9,616.5 695.7,622.0 718.0,633.3 740.5,633.3 757.3,636.0 768.5,624.9 788.1,622.0 802.1,608.0 813.3,591.3 830.1,580.0 841.3,577.3" fill="none" stroke="#2c2c2c" stroke-width="2.2" stroke-linejoin="round"/>
<polyline points="662.0,482.0 653.7,482.0 642.4,470.8 636.8,476.4 628.4,482.0 611.6,493.2 597.6,496.0 586.4,507.2 566.8,515.6 552.8,518.4 538.8,521.2 536.0,526.8 550.0,535.2 558.4,552.0 552.8,563.2 566.8,588.5 583.6,596.9 594.8,610.9 608.8,619.3 617.2,633.3 628.4,641.7 645.2,641.7 656.5,636.0 667.7,616.5 678.9,616.5 695.7,622.0 718.0,633.3 740.5,633.3 757.3,636.0 768.5,624.9 788.1,622.0 802.1,608.0 813.3,591.3 830.1,580.0 841.3,577.3" fill="none" stroke="#3a3a3a" stroke-width="0.7" stroke-linejoin="round"/>
<polyline points="617.2,633.3 597.6,647.3 572.4,664.1 566.8,681.0 578.0,701.0" fill="none" stroke="#2c2c2c" stroke-width="2.2" stroke-linejoin="round"/>
<polyline points="617.2,633.3 597.6,647.3 572.4,664.1 566.8,681.0 578.0,701.0" fill="none" stroke="#3a3a3a" stroke-width="0.7" stroke-linejoin="round"/>
<polyline points="757.3,636.0 754.5,652.9 757.3,672.5 762.9,686.5 765.7,701.0" fill="none" stroke="#2c2c2c" stroke-width="2.2" stroke-linejoin="round"/>
<polyline points="757.3,636.0 754.5,652.9 757.3,672.5 762.9,686.5 765.7,701.0" fill="none" stroke="#3a3a3a" stroke-width="0.7" stroke-linejoin="round"/>
<polyline points="762.9,686.5 782.5,683.7 816.0,680.9 838.5,675.3 858.1,669.7 880.0,666.3 894.0,673.4 906.4,666.3 915.2,657.5 924.0,645.2 938.1,645.2 950.4,648.7 962.8,645.2 973.3,654.0 980.4,659.3 994.5,657.5 1008.5,666.3 1017.3,676.9 1024.4,680.4 1040.0,690.0 1060.0,701.0" fill="none" stroke="#2c2c2c" stroke-width="2.2" stroke-linejoin="round"/>
<polyline points="762.9,686.5 782.5,683.7 816.0,680.9 838.5,675.3 858.1,669.7 880.0,666.3 894.0,673.4 906.4,666.3 915.2,657.5 924.0,645.2 938.1,645.2 950.4,648.7 962.8,645.2 973.3,654.0 980.4,659.3 994.5,657.5 1008.5,666.3 1017.3,676.9 1024.4,680.4 1040.0,690.0 1060.0,701.0" fill="none" stroke="#3a3a3a" stroke-width="0.7" stroke-linejoin="round"/>
<polyline points="994.5,657.5 996.2,645.2 999.7,636.4 1006.8,624.0 1012.0,613.5 1025.0,614.0" fill="none" stroke="#2c2c2c" stroke-width="2.2" stroke-linejoin="round"/>
<polyline points="994.5,657.5 996.2,645.2 999.7,636.4 1006.8,624.0 1012.0,613.5 1025.0,614.0" fill="none" stroke="#3a3a3a" stroke-width="0.7" stroke-linejoin="round"/>
<polyline points="1063.5,420.0 1070.0,430.0 1080.0,431.0 1090.0,412.0 1100.0,404.0 1136.0,402.4 1160.0,405.0 1190.0,410.0 1216.0,418.0" fill="none" stroke="#2c2c2c" stroke-width="2.2" stroke-linejoin="round"/>
<polyline points="1063.5,420.0 1070.0,430.0 1080.0,431.0 1090.0,412.0 1100.0,404.0 1136.0,402.4 1160.0,405.0 1190.0,410.0 1216.0,418.0" fill="none" stroke="#3a3a3a" stroke-width="0.7" stroke-linejoin="round"/>
<polyline points="946.2,142.0 960.0,149.0 977.2,159.3 998.0,162.8 1015.0,166.2 1025.5,176.6 1022.0,193.8 1022.0,211.0 1023.0,221.0" fill="none" stroke="#2c2c2c" stroke-width="2.2" stroke-linejoin="round"/>
<polyline points="946.2,142.0 960.0,149.0 977.2,159.3 998.0,162.8 1015.0,166.2 1025.5,176.6 1022.0,193.8 1022.0,211.0 1023.0,221.0" fill="none" stroke="#3a3a3a" stroke-width="0.7" stroke-linejoin="round"/>
<polyline points="1056.4,253.6 1070.5,251.2 1098.7,255.9 1117.5,241.8 1145.7,225.4 1152.8,208.9 1159.8,187.8 1164.5,176.0 1178.6,169.0 1195.0,159.6 1204.5,147.8 1192.7,140.8 1195.0,129.0 1199.8,122.0 1216.0,114.9" fill="none" stroke="#2c2c2c" stroke-width="2.2" stroke-linejoin="round"/>
<polyline points="1056.4,253.6 1070.5,251.2 1098.7,255.9 1117.5,241.8 1145.7,225.4 1152.8,208.9 1159.8,187.8 1164.5,176.0 1178.6,169.0 1195.0,159.6 1204.5,147.8 1192.7,140.8 1195.0,129.0 1199.8,122.0 1216.0,114.9" fill="none" stroke="#3a3a3a" stroke-width="0.7" stroke-linejoin="round"/>
<polyline points="1153.0,82.0 1162.0,87.0" fill="none" stroke="#2c2c2c" stroke-width="2.2" stroke-linejoin="round"/>
<polyline points="1153.0,82.0 1162.0,87.0" fill="none" stroke="#3a3a3a" stroke-width="0.7" stroke-linejoin="round"/>
<polyline points="1175.0,701.0 1190.0,690.0 1200.0,680.0 1216.0,676.0" fill="none" stroke="#2c2c2c" stroke-width="2.2" stroke-linejoin="round"/>
<polyline points="1175.0,701.0 1190.0,690.0 1200.0,680.0 1216.0,676.0" fill="none" stroke="#3a3a3a" stroke-width="0.7" stroke-linejoin="round"/>
<circle cx="691" cy="557.7" r="23.4" fill="#8a2420" stroke="#c9a9a6" stroke-width="1"/>
<circle cx="883" cy="637.8" r="14.7" fill="#8a2420" stroke="#c9a9a6" stroke-width="1"/>
<circle cx="1073" cy="157.5" r="10.5" fill="#8a2420" stroke="#c9a9a6" stroke-width="1"/>
<text x="558" y="118.5" font-size="11" fill="#7a7a7a" font-weight="bold" letter-spacing="0.2" font-style="normal" text-anchor="middle">Copenhagen</text>
<text x="672" y="200" font-size="11" fill="#4a4d50" font-weight="normal" letter-spacing="2.5" font-style="italic" text-anchor="middle">Baltic</text>
<text x="673" y="216.5" font-size="11" fill="#4a4d50" font-weight="normal" letter-spacing="2.5" font-style="italic" text-anchor="middle">Sea</text>
<text x="596" y="364" font-size="12" fill="#7a7a7a" font-weight="bold" letter-spacing="0.2" font-style="normal" text-anchor="middle">Berlin</text>
<text x="550" y="450.5" font-size="11" fill="#7a7a7a" font-weight="bold" letter-spacing="0.2" font-style="normal" text-anchor="middle">Leipzig</text>
<text x="612" y="471.5" font-size="11" fill="#7a7a7a" font-weight="bold" letter-spacing="0.2" font-style="normal" text-anchor="middle">Dresden</text>
<text x="575" y="487.5" font-size="10" fill="#6e6e6e" font-weight="normal" letter-spacing="0.4" font-style="normal" text-anchor="middle">Chemnitz</text>
<text x="644" y="542" font-size="12" fill="#7a7a7a" font-weight="bold" letter-spacing="0.2" font-style="normal" text-anchor="middle">Prague</text>
<text x="702" y="576" font-size="11" fill="#555" font-weight="normal" letter-spacing="3.5" font-style="normal" text-anchor="middle">CZECHIA</text>
<text x="732" y="672" font-size="12" fill="#7a7a7a" font-weight="bold" letter-spacing="0.2" font-style="normal" text-anchor="middle">Vienna</text>
<text x="527" y="677" font-size="12" fill="#7a7a7a" font-weight="bold" letter-spacing="0.2" font-style="normal" text-anchor="middle">ch</text>
<text x="868" y="637.5" font-size="11" fill="#555" font-weight="normal" letter-spacing="3.5" font-style="normal" text-anchor="middle">SLOVAKIA</text>
<text x="954" y="637.5" font-size="10" fill="#6e6e6e" font-weight="normal" letter-spacing="0.4" font-style="normal" text-anchor="middle">Kosice</text>
<text x="1073" y="145" font-size="11" fill="#555" font-weight="normal" letter-spacing="3" font-style="normal" text-anchor="middle">LITHUANIA</text>
<text x="958" y="197" font-size="11" fill="#555" font-weight="normal" letter-spacing="3" font-style="normal" text-anchor="middle">RUSSIA</text>
<text x="1136" y="198" font-size="12" fill="#7a7a7a" font-weight="bold" letter-spacing="0.2" font-style="normal" text-anchor="middle">Vilnius</text>
<text x="1139" y="495" font-size="10" fill="#6e6e6e" font-weight="normal" letter-spacing="0.4" font-style="normal" text-anchor="middle">Lutsk</text>
<text x="1080" y="558.5" font-size="11" fill="#7a7a7a" font-weight="bold" letter-spacing="0.2" font-style="normal" text-anchor="middle">Lviv</text>
<text x="1151" y="579.5" font-size="10" fill="#6e6e6e" font-weight="normal" letter-spacing="0.4" font-style="normal" text-anchor="middle">Ternopil</text>
<text x="1200" y="589" font-size="10" fill="#6e6e6e" font-weight="normal" letter-spacing="0.4" font-style="normal" text-anchor="middle">Khmelni</text>
<text x="1111" y="623" font-size="10" fill="#6e6e6e" font-weight="normal" letter-spacing="0.4" font-style="normal" text-anchor="middle">Ivano-Frankivsk</text>
<text x="1161" y="667" font-size="10" fill="#6e6e6e" font-weight="normal" letter-spacing="0.4" font-style="normal" text-anchor="middle">Chernivtsi</text>
<text x="1213" y="319" font-size="11" fill="#7b7b7b" font-weight="normal" letter-spacing="0.4" font-style="normal" text-anchor="middle">E</text>
<text x="734" y="704" font-size="10" fill="#6e6e6e" font-weight="normal" letter-spacing="0.4" font-style="normal" text-anchor="middle">Mattersburg</text>
</g>
<g clip-path="url(#mc)">
<text x="648.6" y="295" font-size="11" fill="#a0a4a8" font-weight="normal" letter-spacing="0.4" text-anchor="middle" stroke="#50555a" stroke-opacity="0.45" stroke-width="2" paint-order="stroke">Szczecin</text>
<text x="839" y="223.5" font-size="11" fill="#a0a4a8" font-weight="normal" letter-spacing="0.4" text-anchor="middle" stroke="#50555a" stroke-opacity="0.45" stroke-width="2" paint-order="stroke">Gdansk</text>
<text x="806" y="319.5" font-size="11" fill="#a0a4a8" font-weight="normal" letter-spacing="0.4" text-anchor="middle" stroke="#50555a" stroke-opacity="0.45" stroke-width="2" paint-order="stroke">Bydgoszcz</text>
<text x="757" y="373" font-size="11" fill="#a0a4a8" font-weight="normal" letter-spacing="0.4" text-anchor="middle" stroke="#50555a" stroke-opacity="0.45" stroke-width="2" paint-order="stroke">Poznan</text>
<text x="865" y="356.5" font-size="13" fill="#8f9396" font-weight="bold" letter-spacing="3" text-anchor="middle" stroke="#50555a" stroke-opacity="0.45" stroke-width="2" paint-order="stroke">POLAND</text>
<text x="943" y="386" font-size="11" fill="#a0a4a8" font-weight="normal" letter-spacing="0.4" text-anchor="middle" stroke="#50555a" stroke-opacity="0.45" stroke-width="2" paint-order="stroke">Warsaw</text>
<text x="873" y="419" font-size="11" fill="#a0a4a8" font-weight="normal" letter-spacing="0.4" text-anchor="middle" stroke="#50555a" stroke-opacity="0.45" stroke-width="2" paint-order="stroke">Lodz</text>
<text x="762" y="468" font-size="11" fill="#a0a4a8" font-weight="normal" letter-spacing="0.4" text-anchor="middle" stroke="#50555a" stroke-opacity="0.45" stroke-width="2" paint-order="stroke">Wroclaw</text>
<text x="1043" y="318.5" font-size="11" fill="#a0a4a8" font-weight="normal" letter-spacing="0.4" text-anchor="middle" stroke="#50555a" stroke-opacity="0.45" stroke-width="2" paint-order="stroke">Bialystok</text>
<text x="1070" y="277.5" font-size="11" fill="#7b7b7b" font-weight="normal" letter-spacing="0.4" font-style="normal" text-anchor="middle">Hronda</text>
<text x="1067" y="396" font-size="11" fill="#7b7b7b" font-weight="normal" letter-spacing="0.4" font-style="normal" text-anchor="middle">Brest</text>
<text x="1014" y="458" font-size="11" fill="#a0a4a8" font-weight="normal" letter-spacing="0.4" text-anchor="middle" stroke="#50555a" stroke-opacity="0.45" stroke-width="2" paint-order="stroke">Lublin</text>
<text x="925" y="486" font-size="11" fill="#a0a4a8" font-weight="normal" letter-spacing="0.4" text-anchor="middle" stroke="#50555a" stroke-opacity="0.45" stroke-width="2" paint-order="stroke">Kielce</text>
<text x="849" y="529" font-size="11" fill="#a0a4a8" font-weight="normal" letter-spacing="0.4" text-anchor="middle" stroke="#50555a" stroke-opacity="0.45" stroke-width="2" paint-order="stroke">Katowice</text>
<text x="893" y="542.5" font-size="11" fill="#a0a4a8" font-weight="normal" letter-spacing="0.4" text-anchor="middle" stroke="#50555a" stroke-opacity="0.45" stroke-width="2" paint-order="stroke">Cracow</text>
</g>
<g clip-path="url(#mc)">
<circle cx="724" cy="234" r="9.4" fill="#2da066" stroke="#20864e" stroke-width="1"/>
<path d="M721.2,226.4h5.6v5h5v5.6h-5v5h-5.6v-5h-5v-5.6h5z" fill="#fff"/>
<circle cx="736" cy="304" r="9.4" fill="#2da066" stroke="#20864e" stroke-width="1"/>
<path d="M733.2,296.4h5.6v5h5v5.6h-5v5h-5.6v-5h-5v-5.6h5z" fill="#fff"/>
<circle cx="680" cy="343.7" r="9.4" fill="#2da066" stroke="#20864e" stroke-width="1"/>
<path d="M677.2,336.1h5.6v5h5v5.6h-5v5h-5.6v-5h-5v-5.6h5z" fill="#fff"/>
<circle cx="816.7" cy="200.5" r="9.4" fill="#2da066" stroke="#20864e" stroke-width="1"/>
<path d="M813.9,192.9h5.6v5h5v5.6h-5v5h-5.6v-5h-5v-5.6h5z" fill="#fff"/>
<circle cx="830.7" cy="209" r="9.4" fill="#2da066" stroke="#20864e" stroke-width="1"/>
<path d="M827.9,201.4h5.6v5h5v5.6h-5v5h-5.6v-5h-5v-5.6h5z" fill="#fff"/>
<circle cx="870" cy="237" r="9.4" fill="#2da066" stroke="#20864e" stroke-width="1"/>
<path d="M867.2,229.4h5.6v5h5v5.6h-5v5h-5.6v-5h-5v-5.6h5z" fill="#fff"/>
<circle cx="826.4" cy="294.2" r="9.4" fill="#2da066" stroke="#20864e" stroke-width="1"/>
<path d="M823.6,286.6h5.6v5h5v5.6h-5v5h-5.6v-5h-5v-5.6h5z" fill="#fff"/>
<circle cx="841.5" cy="291" r="9.4" fill="#2da066" stroke="#20864e" stroke-width="1"/>
<path d="M838.7,283.4h5.6v5h5v5.6h-5v5h-5.6v-5h-5v-5.6h5z" fill="#fff"/>
<circle cx="807" cy="316.8" r="9.4" fill="#2da066" stroke="#20864e" stroke-width="1"/>
<path d="M804.2,309.2h5.6v5h5v5.6h-5v5h-5.6v-5h-5v-5.6h5z" fill="#fff"/>
<circle cx="832.9" cy="324.3" r="9.4" fill="#2da066" stroke="#20864e" stroke-width="1"/>
<path d="M830.1,316.7h5.6v5h5v5.6h-5v5h-5.6v-5h-5v-5.6h5z" fill="#fff"/>
<circle cx="754" cy="367" r="9.4" fill="#2da066" stroke="#20864e" stroke-width="1"/>
<path d="M751.2,359.4h5.6v5h5v5.6h-5v5h-5.6v-5h-5v-5.6h5z" fill="#fff"/>
<circle cx="881" cy="359" r="9.4" fill="#2da066" stroke="#20864e" stroke-width="1"/>
<path d="M878.2,351.4h5.6v5h5v5.6h-5v5h-5.6v-5h-5v-5.6h5z" fill="#fff"/>
<circle cx="918.6" cy="266.2" r="9.4" fill="#2da066" stroke="#20864e" stroke-width="1"/>
<path d="M915.8,258.6h5.6v5h5v5.6h-5v5h-5.6v-5h-5v-5.6h5z" fill="#fff"/>
<circle cx="977.9" cy="245.7" r="9.4" fill="#2da066" stroke="#20864e" stroke-width="1"/>
<path d="M975.1,238.1h5.6v5h5v5.6h-5v5h-5.6v-5h-5v-5.6h5z" fill="#fff"/>
<circle cx="979" cy="278" r="9.4" fill="#2da066" stroke="#20864e" stroke-width="1"/>
<path d="M976.2,270.4h5.6v5h5v5.6h-5v5h-5.6v-5h-5v-5.6h5z" fill="#fff"/>
<circle cx="1009" cy="275.9" r="9.4" fill="#2da066" stroke="#20864e" stroke-width="1"/>
<path d="M1006.2,268.3h5.6v5h5v5.6h-5v5h-5.6v-5h-5v-5.6h5z" fill="#fff"/>
<circle cx="1029.6" cy="240.3" r="9.4" fill="#2da066" stroke="#20864e" stroke-width="1"/>
<path d="M1026.8,232.7h5.6v5h5v5.6h-5v5h-5.6v-5h-5v-5.6h5z" fill="#fff"/>
<circle cx="1032.8" cy="260.8" r="9.4" fill="#2da066" stroke="#20864e" stroke-width="1"/>
<path d="M1030.0,253.2h5.6v5h5v5.6h-5v5h-5.6v-5h-5v-5.6h5z" fill="#fff"/>
<circle cx="991.9" cy="312.5" r="9.4" fill="#2da066" stroke="#20864e" stroke-width="1"/>
<path d="M989.1,304.9h5.6v5h5v5.6h-5v5h-5.6v-5h-5v-5.6h5z" fill="#fff"/>
<circle cx="969.3" cy="321.1" r="9.4" fill="#2da066" stroke="#20864e" stroke-width="1"/>
<path d="M966.5,313.5h5.6v5h5v5.6h-5v5h-5.6v-5h-5v-5.6h5z" fill="#fff"/>
<circle cx="926.2" cy="334" r="9.4" fill="#2da066" stroke="#20864e" stroke-width="1"/>
<path d="M923.4,326.4h5.6v5h5v5.6h-5v5h-5.6v-5h-5v-5.6h5z" fill="#fff"/>
<circle cx="1040.3" cy="315.7" r="9.4" fill="#2da066" stroke="#20864e" stroke-width="1"/>
<path d="M1037.5,308.1h5.6v5h5v5.6h-5v5h-5.6v-5h-5v-5.6h5z" fill="#fff"/>
<circle cx="1042.5" cy="343.7" r="9.4" fill="#2da066" stroke="#20864e" stroke-width="1"/>
<path d="M1039.7,336.1h5.6v5h5v5.6h-5v5h-5.6v-5h-5v-5.6h5z" fill="#fff"/>
<circle cx="1060.8" cy="344.8" r="9.4" fill="#2da066" stroke="#20864e" stroke-width="1"/>
<path d="M1058.0,337.2h5.6v5h5v5.6h-5v5h-5.6v-5h-5v-5.6h5z" fill="#fff"/>
<circle cx="946" cy="378" r="9.4" fill="#2da066" stroke="#20864e" stroke-width="1"/>
<path d="M943.2,370.4h5.6v5h5v5.6h-5v5h-5.6v-5h-5v-5.6h5z" fill="#fff"/>
<circle cx="816.6" cy="385.9" r="9.4" fill="#2da066" stroke="#20864e" stroke-width="1"/>
<path d="M813.8,378.3h5.6v5h5v5.6h-5v5h-5.6v-5h-5v-5.6h5z" fill="#fff"/>
<circle cx="866.7" cy="446.2" r="9.4" fill="#2da066" stroke="#20864e" stroke-width="1"/>
<path d="M863.9,438.6h5.6v5h5v5.6h-5v5h-5.6v-5h-5v-5.6h5z" fill="#fff"/>
<circle cx="871.6" cy="468.8" r="9.4" fill="#2da066" stroke="#20864e" stroke-width="1"/>
<path d="M868.8,461.2h5.6v5h5v5.6h-5v5h-5.6v-5h-5v-5.6h5z" fill="#fff"/>
<circle cx="856" cy="486" r="9.4" fill="#2da066" stroke="#20864e" stroke-width="1"/>
<path d="M853.2,478.4h5.6v5h5v5.6h-5v5h-5.6v-5h-5v-5.6h5z" fill="#fff"/>
<circle cx="774.6" cy="511.9" r="9.4" fill="#2da066" stroke="#20864e" stroke-width="1"/>
<path d="M771.8,504.3h5.6v5h5v5.6h-5v5h-5.6v-5h-5v-5.6h5z" fill="#fff"/>
<circle cx="814.6" cy="520.4" r="9.4" fill="#2da066" stroke="#20864e" stroke-width="1"/>
<path d="M811.8,512.8h5.6v5h5v5.6h-5v5h-5.6v-5h-5v-5.6h5z" fill="#fff"/>
<circle cx="1000.8" cy="388" r="9.4" fill="#2da066" stroke="#20864e" stroke-width="1"/>
<path d="M998.0,380.4h5.6v5h5v5.6h-5v5h-5.6v-5h-5v-5.6h5z" fill="#fff"/>
<circle cx="1005.1" cy="406.3" r="9.4" fill="#2da066" stroke="#20864e" stroke-width="1"/>
<path d="M1002.3,398.7h5.6v5h5v5.6h-5v5h-5.6v-5h-5v-5.6h5z" fill="#fff"/>
<circle cx="1037.4" cy="396.6" r="9.4" fill="#2da066" stroke="#20864e" stroke-width="1"/>
<path d="M1034.6,389.0h5.6v5h5v5.6h-5v5h-5.6v-5h-5v-5.6h5z" fill="#fff"/>
<circle cx="897.4" cy="435.4" r="9.4" fill="#2da066" stroke="#20864e" stroke-width="1"/>
<path d="M894.6,427.8h5.6v5h5v5.6h-5v5h-5.6v-5h-5v-5.6h5z" fill="#fff"/>
<circle cx="966.3" cy="430" r="9.4" fill="#2da066" stroke="#20864e" stroke-width="1"/>
<path d="M963.5,422.4h5.6v5h5v5.6h-5v5h-5.6v-5h-5v-5.6h5z" fill="#fff"/>
<circle cx="949" cy="444" r="9.4" fill="#2da066" stroke="#20864e" stroke-width="1"/>
<path d="M946.2,436.4h5.6v5h5v5.6h-5v5h-5.6v-5h-5v-5.6h5z" fill="#fff"/>
<circle cx="986.8" cy="443" r="9.4" fill="#2da066" stroke="#20864e" stroke-width="1"/>
<path d="M984.0,435.4h5.6v5h5v5.6h-5v5h-5.6v-5h-5v-5.6h5z" fill="#fff"/>
<circle cx="1053.6" cy="462.3" r="9.4" fill="#2da066" stroke="#20864e" stroke-width="1"/>
<path d="M1050.8,454.7h5.6v5h5v5.6h-5v5h-5.6v-5h-5v-5.6h5z" fill="#fff"/>
<circle cx="928.6" cy="511.7" r="9.4" fill="#2da066" stroke="#20864e" stroke-width="1"/>
<path d="M925.8,504.1h5.6v5h5v5.6h-5v5h-5.6v-5h-5v-5.6h5z" fill="#fff"/>
<circle cx="1051.4" cy="514" r="9.4" fill="#2da066" stroke="#20864e" stroke-width="1"/>
<path d="M1048.6,506.4h5.6v5h5v5.6h-5v5h-5.6v-5h-5v-5.6h5z" fill="#fff"/>
<circle cx="897.7" cy="519.5" r="9.4" fill="#2da066" stroke="#20864e" stroke-width="1"/>
<path d="M894.9,511.9h5.6v5h5v5.6h-5v5h-5.6v-5h-5v-5.6h5z" fill="#fff"/>
<circle cx="877" cy="526" r="9.4" fill="#2da066" stroke="#20864e" stroke-width="1"/>
<path d="M874.2,518.4h5.6v5h5v5.6h-5v5h-5.6v-5h-5v-5.6h5z" fill="#fff"/>
<circle cx="910.2" cy="531.5" r="9.4" fill="#2da066" stroke="#20864e" stroke-width="1"/>
<path d="M907.4,523.9h5.6v5h5v5.6h-5v5h-5.6v-5h-5v-5.6h5z" fill="#fff"/>
<circle cx="896.4" cy="545.4" r="9.4" fill="#2da066" stroke="#20864e" stroke-width="1"/>
<path d="M893.6,537.8h5.6v5h5v5.6h-5v5h-5.6v-5h-5v-5.6h5z" fill="#fff"/>
<circle cx="894" cy="556.8" r="9.4" fill="#2da066" stroke="#20864e" stroke-width="1"/>
<path d="M891.2,549.2h5.6v5h5v5.6h-5v5h-5.6v-5h-5v-5.6h5z" fill="#fff"/>
<circle cx="941.6" cy="532.4" r="9.4" fill="#2da066" stroke="#20864e" stroke-width="1"/>
<path d="M938.8,524.8h5.6v5h5v5.6h-5v5h-5.6v-5h-5v-5.6h5z" fill="#fff"/>
<circle cx="941.6" cy="543.9" r="9.4" fill="#2da066" stroke="#20864e" stroke-width="1"/>
<path d="M938.8,536.3h5.6v5h5v5.6h-5v5h-5.6v-5h-5v-5.6h5z" fill="#fff"/>
<circle cx="961.9" cy="524.6" r="9.4" fill="#2da066" stroke="#20864e" stroke-width="1"/>
<path d="M959.1,517.0h5.6v5h5v5.6h-5v5h-5.6v-5h-5v-5.6h5z" fill="#fff"/>
<circle cx="960.1" cy="542.1" r="9.4" fill="#2da066" stroke="#20864e" stroke-width="1"/>
<path d="M957.3,534.5h5.6v5h5v5.6h-5v5h-5.6v-5h-5v-5.6h5z" fill="#fff"/>
<circle cx="964.2" cy="560" r="9.4" fill="#2da066" stroke="#20864e" stroke-width="1"/>
<path d="M961.4,552.4h5.6v5h5v5.6h-5v5h-5.6v-5h-5v-5.6h5z" fill="#fff"/>
<circle cx="927.9" cy="568" r="9.4" fill="#2da066" stroke="#20864e" stroke-width="1"/>
<path d="M925.1,560.4h5.6v5h5v5.6h-5v5h-5.6v-5h-5v-5.6h5z" fill="#fff"/>
<circle cx="1020.5" cy="544.4" r="9.4" fill="#2da066" stroke="#20864e" stroke-width="1"/>
<path d="M1017.7,536.8h5.6v5h5v5.6h-5v5h-5.6v-5h-5v-5.6h5z" fill="#fff"/>
<circle cx="1022.3" cy="558.5" r="9.4" fill="#2da066" stroke="#20864e" stroke-width="1"/>
<path d="M1019.5,550.9h5.6v5h5v5.6h-5v5h-5.6v-5h-5v-5.6h5z" fill="#fff"/>
<circle cx="996.6" cy="577" r="9.4" fill="#2da066" stroke="#20864e" stroke-width="1"/>
<path d="M993.8,569.4h5.6v5h5v5.6h-5v5h-5.6v-5h-5v-5.6h5z" fill="#fff"/>
<circle cx="1036" cy="316" r="9.4" fill="#2da066" stroke="#20864e" stroke-width="1"/>
<path d="M1033.2,308.4h5.6v5h5v5.6h-5v5h-5.6v-5h-5v-5.6h5z" fill="#fff"/>
<circle cx="647.6" cy="291" r="9.4" fill="#2da066" stroke="#20864e" stroke-width="1"/>
<path d="M644.8,283.4h5.6v5h5v5.6h-5v5h-5.6v-5h-5v-5.6h5z" fill="#fff"/>
<circle cx="647.6" cy="291" r="4.3" fill="#fff" stroke="#f00" stroke-width="2.6"/>
<circle cx="833" cy="219.9" r="9.4" fill="#2da066" stroke="#20864e" stroke-width="1"/>
<path d="M830.2,212.3h5.6v5h5v5.6h-5v5h-5.6v-5h-5v-5.6h5z" fill="#fff"/>
<circle cx="833" cy="219.9" r="4.3" fill="#fff" stroke="#f00" stroke-width="2.6"/>
<circle cx="757" cy="369.7" r="9.4" fill="#2da066" stroke="#20864e" stroke-width="1"/>
<path d="M754.2,362.1h5.6v5h5v5.6h-5v5h-5.6v-5h-5v-5.6h5z" fill="#fff"/>
<circle cx="757" cy="369.7" r="4.3" fill="#fff" stroke="#f00" stroke-width="2.6"/>
<circle cx="896" cy="272.6" r="9.4" fill="#2da066" stroke="#20864e" stroke-width="1"/>
<path d="M893.2,265.0h5.6v5h5v5.6h-5v5h-5.6v-5h-5v-5.6h5z" fill="#fff"/>
<circle cx="896" cy="272.6" r="4.3" fill="#fff" stroke="#f00" stroke-width="2.6"/>
<circle cx="942" cy="383" r="9.4" fill="#2da066" stroke="#20864e" stroke-width="1"/>
<path d="M939.2,375.4h5.6v5h5v5.6h-5v5h-5.6v-5h-5v-5.6h5z" fill="#fff"/>
<circle cx="942" cy="383" r="4.3" fill="#fff" stroke="#f00" stroke-width="2.6"/>
<circle cx="692.8" cy="405.2" r="9.4" fill="#2da066" stroke="#20864e" stroke-width="1"/>
<path d="M690.0,397.6h5.6v5h5v5.6h-5v5h-5.6v-5h-5v-5.6h5z" fill="#fff"/>
<circle cx="692.8" cy="405.2" r="4.3" fill="#fff" stroke="#f00" stroke-width="2.6"/>
<circle cx="810.2" cy="418.2" r="9.4" fill="#2da066" stroke="#20864e" stroke-width="1"/>
<path d="M807.4,410.6h5.6v5h5v5.6h-5v5h-5.6v-5h-5v-5.6h5z" fill="#fff"/>
<circle cx="810.2" cy="418.2" r="4.3" fill="#fff" stroke="#f00" stroke-width="2.6"/>
<circle cx="869.4" cy="412" r="9.4" fill="#2da066" stroke="#20864e" stroke-width="1"/>
<path d="M866.6,404.4h5.6v5h5v5.6h-5v5h-5.6v-5h-5v-5.6h5z" fill="#fff"/>
<circle cx="869.4" cy="412" r="4.3" fill="#fff" stroke="#f00" stroke-width="2.6"/>
<circle cx="695" cy="454.8" r="9.4" fill="#2da066" stroke="#20864e" stroke-width="1"/>
<path d="M692.2,447.2h5.6v5h5v5.6h-5v5h-5.6v-5h-5v-5.6h5z" fill="#fff"/>
<circle cx="695" cy="454.8" r="4.3" fill="#fff" stroke="#f00" stroke-width="2.6"/>
<circle cx="762.8" cy="463.4" r="9.4" fill="#2da066" stroke="#20864e" stroke-width="1"/>
<path d="M760.0,455.8h5.6v5h5v5.6h-5v5h-5.6v-5h-5v-5.6h5z" fill="#fff"/>
<circle cx="762.8" cy="463.4" r="4.3" fill="#fff" stroke="#f00" stroke-width="2.6"/>
<circle cx="726.2" cy="489.3" r="9.4" fill="#2da066" stroke="#20864e" stroke-width="1"/>
<path d="M723.4,481.7h5.6v5h5v5.6h-5v5h-5.6v-5h-5v-5.6h5z" fill="#fff"/>
<circle cx="726.2" cy="489.3" r="4.3" fill="#fff" stroke="#f00" stroke-width="2.6"/>
<circle cx="802.6" cy="497" r="9.4" fill="#2da066" stroke="#20864e" stroke-width="1"/>
<path d="M799.8,489.4h5.6v5h5v5.6h-5v5h-5.6v-5h-5v-5.6h5z" fill="#fff"/>
<circle cx="802.6" cy="497" r="4.3" fill="#fff" stroke="#f00" stroke-width="2.6"/>
<circle cx="814.6" cy="537.5" r="9.4" fill="#2da066" stroke="#20864e" stroke-width="1"/>
<path d="M811.8,529.9h5.6v5h5v5.6h-5v5h-5.6v-5h-5v-5.6h5z" fill="#fff"/>
<circle cx="814.6" cy="537.5" r="4.3" fill="#fff" stroke="#f00" stroke-width="2.6"/>
<circle cx="869.5" cy="510.8" r="9.4" fill="#2da066" stroke="#20864e" stroke-width="1"/>
<path d="M866.7,503.2h5.6v5h5v5.6h-5v5h-5.6v-5h-5v-5.6h5z" fill="#fff"/>
<circle cx="869.5" cy="510.8" r="4.3" fill="#fff" stroke="#f00" stroke-width="2.6"/>
<circle cx="847" cy="518.5" r="9.4" fill="#2da066" stroke="#20864e" stroke-width="1"/>
<path d="M844.2,510.9h5.6v5h5v5.6h-5v5h-5.6v-5h-5v-5.6h5z" fill="#fff"/>
<circle cx="847" cy="518.5" r="4.3" fill="#fff" stroke="#f00" stroke-width="2.6"/>
<circle cx="852.2" cy="536.6" r="9.4" fill="#2da066" stroke="#20864e" stroke-width="1"/>
<path d="M849.4,529.0h5.6v5h5v5.6h-5v5h-5.6v-5h-5v-5.6h5z" fill="#fff"/>
<circle cx="852.2" cy="536.6" r="4.3" fill="#fff" stroke="#f00" stroke-width="2.6"/>
<circle cx="835" cy="560" r="9.4" fill="#2da066" stroke="#20864e" stroke-width="1"/>
<path d="M832.2,552.4h5.6v5h5v5.6h-5v5h-5.6v-5h-5v-5.6h5z" fill="#fff"/>
<circle cx="835" cy="560" r="4.3" fill="#fff" stroke="#f00" stroke-width="2.6"/>
<circle cx="1013.7" cy="454.8" r="9.4" fill="#2da066" stroke="#20864e" stroke-width="1"/>
<path d="M1010.9,447.2h5.6v5h5v5.6h-5v5h-5.6v-5h-5v-5.6h5z" fill="#fff"/>
<circle cx="1013.7" cy="454.8" r="4.3" fill="#fff" stroke="#f00" stroke-width="2.6"/>
<circle cx="944.8" cy="468.8" r="9.4" fill="#2da066" stroke="#20864e" stroke-width="1"/>
<path d="M942.0,461.2h5.6v5h5v5.6h-5v5h-5.6v-5h-5v-5.6h5z" fill="#fff"/>
<circle cx="944.8" cy="468.8" r="4.3" fill="#fff" stroke="#f00" stroke-width="2.6"/>
<circle cx="925.4" cy="483" r="9.4" fill="#2da066" stroke="#20864e" stroke-width="1"/>
<path d="M922.6,475.4h5.6v5h5v5.6h-5v5h-5.6v-5h-5v-5.6h5z" fill="#fff"/>
<circle cx="925.4" cy="483" r="4.3" fill="#fff" stroke="#f00" stroke-width="2.6"/>
<circle cx="1019.5" cy="506.6" r="9.4" fill="#2da066" stroke="#20864e" stroke-width="1"/>
<path d="M1016.7,499.0h5.6v5h5v5.6h-5v5h-5.6v-5h-5v-5.6h5z" fill="#fff"/>
<circle cx="1019.5" cy="506.6" r="4.3" fill="#fff" stroke="#f00" stroke-width="2.6"/>
<circle cx="895.5" cy="539" r="9.4" fill="#2da066" stroke="#20864e" stroke-width="1"/>
<path d="M892.7,531.4h5.6v5h5v5.6h-5v5h-5.6v-5h-5v-5.6h5z" fill="#fff"/>
<circle cx="895.5" cy="539" r="4.3" fill="#fff" stroke="#f00" stroke-width="2.6"/>
<circle cx="997.5" cy="539.3" r="9.4" fill="#2da066" stroke="#20864e" stroke-width="1"/>
<path d="M994.7,531.7h5.6v5h5v5.6h-5v5h-5.6v-5h-5v-5.6h5z" fill="#fff"/>
<circle cx="997.5" cy="539.3" r="4.3" fill="#fff" stroke="#f00" stroke-width="2.6"/>
</g>
<rect x="521.5" y="82.5" width="694" height="618" fill="none" stroke="#3b3b3b" stroke-width="1"/>
<rect x="1044.5" y="88.5" width="163" height="32.5" fill="#333" stroke="#404040" stroke-width="1"/>
<g fill="none" stroke="#cfcfcf" stroke-width="1.3">
<circle cx="1059.8" cy="102.3" r="5.6"/><line x1="1063.8" y1="106.4" x2="1069.6" y2="112"/>
<path d="M1090.5,97.5h9.5v14l-4.75,-3.2l-4.75,3.2z"/>
<rect x="1120.8" y="97.6" width="2.2" height="2.2" stroke-width="1"/><circle cx="1121.9" cy="102.5" r="1" stroke-width="1"/><rect x="1120.8" y="105.4" width="2.2" height="2.2" stroke-width="1"/><path d="M1120.6,111.2l1.3,-2l1.3,2z" stroke-width="1"/>
<path d="M1125.5,98.5h8.5M1125.5,102.5h8.5M1125.5,106.5h8.5M1125.5,110.5h8.5"/>
<path d="M1159,97l7.5,4.3l-7.5,4.3l-7.5,-4.3z"/><path d="M1151.5,104.3l7.5,4.3l7.5,-4.3"/><path d="M1151.5,107.3l7.5,4.3l7.5,-4.3"/>
<rect x="1183.5" y="97.5" width="6.5" height="6.5"/><rect x="1192.5" y="97.5" width="6.5" height="6.5"/><rect x="1183.5" y="106.5" width="6.5" height="6.5"/><rect x="1192.5" y="106.5" width="6.5" height="6.5"/>
<path d="M1185.5,99.5l3,3M1197,99.5l-3,3M1188.5,108.5l-3,3M1194,108.5l3,3" stroke-width="0.6" stroke-opacity="0.7"/>
</g>
<rect x="1177.5" y="617.5" width="30" height="57" fill="#2f2f2f" stroke="#454545" stroke-width="1"/>
<path d="M1186.5,632h13M1193,625.5v13M1186.5,659h13" stroke="#d8d8d8" stroke-width="1.8"/>
<rect x="894" y="680" width="311" height="15" fill="#c8c8c8"/>
<text x="899" y="692" font-size="11.5" fill="#333" letter-spacing="0.45">Esri, HERE, Garmin, FAO, NOAA, USGS | Esri, HER...</text>
</svg><!--/MAP-->
<div class="p" style="left:1226px;top:597px;width:677px;height:328px">
<div class="ttl" style="left:6px;top:7px;font-size:14px">Przypadki dla Polski w czasie</div>
</div>
<svg style="position:absolute;left:0;top:0" width="1908" height="928" viewBox="0 0 1908 928" font-family="Liberation Sans, sans-serif">
<line x1="1284" y1="790.5" x2="1870" y2="790.5" stroke="#555" stroke-dasharray="3,3"/>
<line x1="1278" y1="790.5" x2="1284" y2="790.5" stroke="#999"/>
<line x1="1284" y1="743.5" x2="1870" y2="743.5" stroke="#555" stroke-dasharray="3,3"/>
<line x1="1278" y1="743.5" x2="1284" y2="743.5" stroke="#999"/>
<line x1="1284" y1="696.5" x2="1870" y2="696.5" stroke="#555" stroke-dasharray="3,3"/>
<line x1="1278" y1="696.5" x2="1284" y2="696.5" stroke="#999"/>
<line x1="1284" y1="649.5" x2="1870" y2="649.5" stroke="#555" stroke-dasharray="3,3"/>
<line x1="1278" y1="649.5" x2="1284" y2="649.5" stroke="#999"/>
<line x1="1374.5" y1="649" x2="1374.5" y2="837" stroke="#555" stroke-dasharray="3,3"/>
<line x1="1374.5" y1="837" x2="1374.5" y2="843" stroke="#999"/>
<line x1="1465.5" y1="649" x2="1465.5" y2="837" stroke="#555" stroke-dasharray="3,3"/>
<line x1="1465.5" y1="837" x2="1465.5" y2="843" stroke="#999"/>
<line x1="1555.5" y1="649" x2="1555.5" y2="837" stroke="#555" stroke-dasharray="3,3"/>
<line x1="1555.5" y1="837" x2="1555.5" y2="843" stroke="#999"/>
<line x1="1646.5" y1="649" x2="1646.5" y2="837" stroke="#555" stroke-dasharray="3,3"/>
<line x1="1646.5" y1="837" x2="1646.5" y2="843" stroke="#999"/>
<line x1="1736.5" y1="649" x2="1736.5" y2="837" stroke="#555" stroke-dasharray="3,3"/>
<line x1="1736.5" y1="837" x2="1736.5" y2="843" stroke="#999"/>
<line x1="1826.5" y1="649" x2="1826.5" y2="837" stroke="#555" stroke-dasharray="3,3"/>
<line x1="1826.5" y1="837" x2="1826.5" y2="843" stroke="#999"/>
<line x1="1284.5" y1="649" x2="1284.5" y2="843" stroke="#999"/>
<line x1="1278" y1="837.5" x2="1870" y2="837.5" stroke="#999"/>
<text x="1271.5" y="841.2" text-anchor="end" font-size="11" fill="#bbb">0</text>
<text x="1271.5" y="794.2" text-anchor="end" font-size="11" fill="#bbb">50</text>
<text x="1271.5" y="747.1" text-anchor="end" font-size="11" fill="#bbb">100</text>
<text x="1271.5" y="700.1" text-anchor="end" font-size="11" fill="#bbb">150</text>
<text x="1271.5" y="653.0" text-anchor="end" font-size="11" fill="#bbb">200</text>
<text x="1287.5" y="855.6" font-size="11" fill="#bbb">4.03</text>
<text x="1377.4" y="855.6" font-size="11" fill="#bbb">6.03</text>
<text x="1467.6" y="855.6" font-size="11" fill="#bbb">8.03</text>
<text x="1557.7" y="855.6" font-size="11" fill="#bbb">10.03</text>
<text x="1648.6" y="855.6" font-size="11" fill="#bbb">12.03</text>
<text x="1738.7" y="855.6" font-size="11" fill="#bbb">14.03</text>
<text x="1828.5" y="855.6" font-size="11" fill="#bbb">16.03</text>
<polyline points="1306.9,837.2 1351.9,837.2 1396.8,837.2 1441.8,837.2 1486.7,837.2 1531.7,837.2 1576.6,837.2 1621.6,837.2 1666.5,836.3 1711.5,835.3 1756.4,834.4 1801.4,834.4 1846.3,834.4" fill="none" stroke="#cfcfcf" stroke-width="1.5"/>
<polyline points="1306.9,836.3 1351.9,836.3 1396.8,834.4 1441.8,831.6 1486.7,826.9 1531.7,821.2 1576.6,816.5 1621.6,808.0 1666.5,789.2 1711.5,773.2 1756.4,739.4 1801.4,719.6 1846.3,696.1" fill="none" stroke="#f00" stroke-width="1.8"/>
<circle cx="1306.9" cy="836.3" r="4" fill="#f00"/>
<circle cx="1351.9" cy="836.3" r="4" fill="#f00"/>
<circle cx="1396.8" cy="834.4" r="4" fill="#f00"/>
<circle cx="1441.8" cy="831.6" r="4" fill="#f00"/>
<circle cx="1486.7" cy="826.9" r="4" fill="#f00"/>
<circle cx="1531.7" cy="821.2" r="4" fill="#f00"/>
<circle cx="1576.6" cy="816.5" r="4" fill="#f00"/>
<circle cx="1621.6" cy="808.0" r="4" fill="#f00"/>
<circle cx="1666.5" cy="789.2" r="4" fill="#f00"/>
<circle cx="1711.5" cy="773.2" r="4" fill="#f00"/>
<circle cx="1756.4" cy="739.4" r="4" fill="#f00"/>
<circle cx="1801.4" cy="719.6" r="4" fill="#f00"/>
<circle cx="1846.3" cy="696.1" r="4" fill="#f00"/>
<circle cx="1306.9" cy="837.2" r="4.2" fill="#ccc"/>
<circle cx="1351.9" cy="837.2" r="4.2" fill="#ccc"/>
<circle cx="1396.8" cy="837.2" r="4.2" fill="#ccc"/>
<circle cx="1441.8" cy="837.2" r="4.2" fill="#ccc"/>
<circle cx="1486.7" cy="837.2" r="4.2" fill="#ccc"/>
<circle cx="1531.7" cy="837.2" r="4.2" fill="#ccc"/>
<circle cx="1576.6" cy="837.2" r="4.2" fill="#ccc"/>
<circle cx="1621.6" cy="837.2" r="4.2" fill="#ccc"/>
<circle cx="1666.5" cy="836.3" r="4.2" fill="#ccc"/>
<circle cx="1711.5" cy="835.3" r="4.2" fill="#ccc"/>
<circle cx="1756.4" cy="834.4" r="4.2" fill="#ccc"/>
<circle cx="1801.4" cy="834.4" r="4.2" fill="#ccc"/>
<circle cx="1846.3" cy="834.4" r="4.2" fill="#ccc"/>
<text x="1306.9" y="828.8" text-anchor="middle" font-size="11" fill="#bbb">1</text>
<text x="1351.9" y="828.8" text-anchor="middle" font-size="11" fill="#bbb">1</text>
<text x="1396.8" y="826.9" text-anchor="middle" font-size="11" fill="#bbb">3</text>
<text x="1441.8" y="824.1" text-anchor="middle" font-size="11" fill="#bbb">6</text>
<text x="1486.7" y="819.4" text-anchor="middle" font-size="11" fill="#bbb">11</text>
<text x="1531.7" y="813.7" text-anchor="middle" font-size="11" fill="#bbb">17</text>
<text x="1576.6" y="809.0" text-anchor="middle" font-size="11" fill="#bbb">22</text>
<text x="1621.6" y="800.5" text-anchor="middle" font-size="11" fill="#bbb">31</text>
<text x="1666.5" y="781.7" text-anchor="middle" font-size="11" fill="#bbb">51</text>
<text x="1711.5" y="765.7" text-anchor="middle" font-size="11" fill="#bbb">68</text>
<text x="1756.4" y="731.9" text-anchor="middle" font-size="11" fill="#bbb">104</text>
<text x="1801.4" y="712.1" text-anchor="middle" font-size="11" fill="#bbb">125</text>
<text x="1846.3" y="688.6" text-anchor="middle" font-size="11" fill="#bbb">150</text>
<text x="1306.9" y="829.7" text-anchor="middle" font-size="11" fill="#bbb">0</text>
<text x="1351.9" y="829.7" text-anchor="middle" font-size="11" fill="#bbb">0</text>
<text x="1396.8" y="829.7" text-anchor="middle" font-size="11" fill="#bbb">0</text>
<text x="1441.8" y="829.7" text-anchor="middle" font-size="11" fill="#bbb">0</text>
<text x="1486.7" y="829.7" text-anchor="middle" font-size="11" fill="#bbb">0</text>
<text x="1531.7" y="829.7" text-anchor="middle" font-size="11" fill="#bbb">0</text>
<text x="1576.6" y="829.7" text-anchor="middle" font-size="11" fill="#bbb">0</text>
<text x="1621.6" y="829.7" text-anchor="middle" font-size="11" fill="#bbb">0</text>
<text x="1666.5" y="828.8" text-anchor="middle" font-size="11" fill="#bbb">1</text>
<text x="1711.5" y="827.8" text-anchor="middle" font-size="11" fill="#bbb">2</text>
<text x="1756.4" y="826.9" text-anchor="middle" font-size="11" fill="#bbb">3</text>
<text x="1801.4" y="826.9" text-anchor="middle" font-size="11" fill="#bbb">3</text>
<text x="1846.3" y="826.9" text-anchor="middle" font-size="11" fill="#bbb">3</text>
<circle cx="1492" cy="895" r="8" fill="#f00"/><text x="1504" y="900" font-size="11" fill="#bbb">Potwierdzone</text>
<circle cx="1595" cy="895" r="8" fill="#ccc"/><text x="1607" y="900" font-size="11" fill="#bbb">Smiertelne</text>
</svg>
</body></html>
